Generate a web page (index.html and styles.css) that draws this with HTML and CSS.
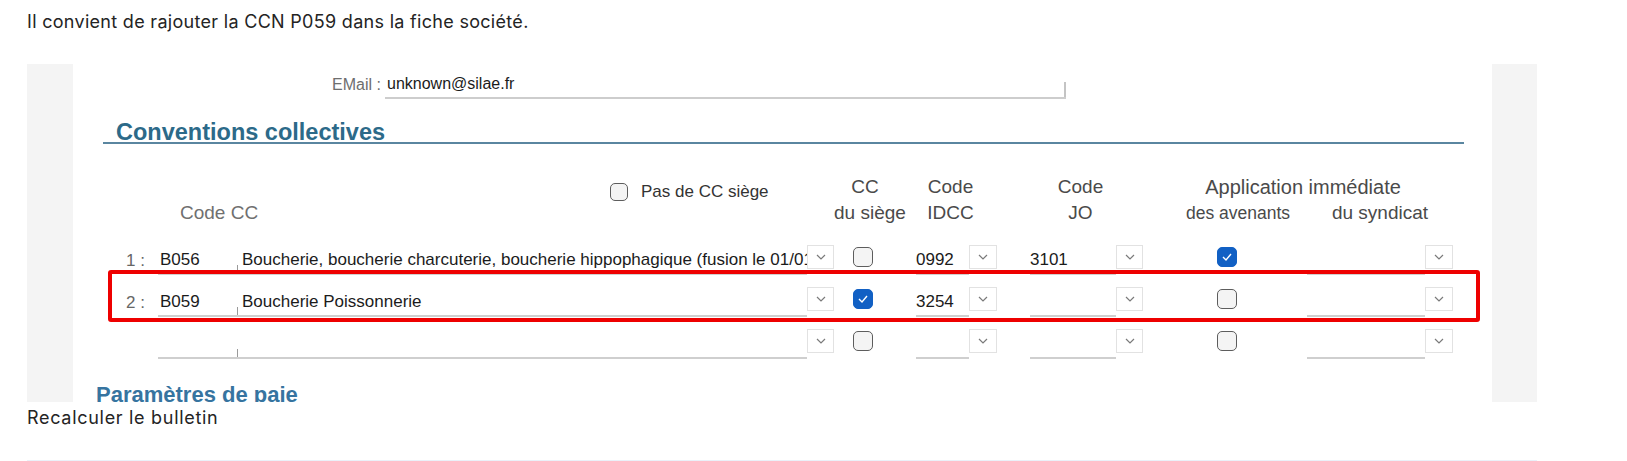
FILE: index.html
```html
<!DOCTYPE html>
<html lang="fr">
<head>
    <meta charset="UTF-8">
    <title>Fiche société - CCN</title>
    <link rel="stylesheet" href="styles.css">
</head>
<body>
    <p class="note">Il convient de rajouter la CCN P059 dans la fiche société.</p>

    <div class="shot">
        <div class="panel">
            <div class="email-row">
                <span class="email-label">EMail :</span>
                <span class="email-field">unknown@silae.fr</span>
            </div>

            <h2 class="section">Conventions collectives</h2>

            <div class="cc-head">
                <div class="h-nosiege"><span class="box small"></span><span>Pas de CC siège</span></div>
                <div class="h-siege">CC<br>du siège</div>
                <div class="h-idcc">Code<br>IDCC</div>
                <div class="h-jo">Code<br>JO</div>
                <div class="h-app">Application immédiate</div>
                <div class="h-code">Code CC</div>
                <div class="h-aven">des avenants</div>
                <div class="h-synd">du syndicat</div>
            </div>

            <div class="cc-row">
                <div class="num">1 :</div>
                <div class="fld code">B056</div>
                <div class="fld desc">Boucherie, boucherie charcuterie, boucherie hippophagique (fusion le 01/01/2019)</div>
                <div class="dd"><svg width="10" height="6" viewBox="0 0 10 6"><polyline points="1,1 5,5 9,1"/></svg></div>
                <span class="box siege"></span>
                <div class="fld idcc">0992</div>
                <div class="dd"><svg width="10" height="6" viewBox="0 0 10 6"><polyline points="1,1 5,5 9,1"/></svg></div>
                <div class="fld jo">3101</div>
                <div class="dd"><svg width="10" height="6" viewBox="0 0 10 6"><polyline points="1,1 5,5 9,1"/></svg></div>
                <span class="box aven checked"><svg width="12" height="10" viewBox="0 0 12 10"><polyline points="2,5 5,8 10,2"/></svg></span>
                <div class="fld synd"></div>
                <div class="dd"><svg width="10" height="6" viewBox="0 0 10 6"><polyline points="1,1 5,5 9,1"/></svg></div>
            </div>

            <div class="cc-row">
                <div class="num">2 :</div>
                <div class="fld code">B059</div>
                <div class="fld desc">Boucherie Poissonnerie</div>
                <div class="dd"><svg width="10" height="6" viewBox="0 0 10 6"><polyline points="1,1 5,5 9,1"/></svg></div>
                <span class="box siege checked"><svg width="12" height="10" viewBox="0 0 12 10"><polyline points="2,5 5,8 10,2"/></svg></span>
                <div class="fld idcc">3254</div>
                <div class="dd"><svg width="10" height="6" viewBox="0 0 10 6"><polyline points="1,1 5,5 9,1"/></svg></div>
                <div class="fld jo"></div>
                <div class="dd"><svg width="10" height="6" viewBox="0 0 10 6"><polyline points="1,1 5,5 9,1"/></svg></div>
                <span class="box aven"></span>
                <div class="fld synd"></div>
                <div class="dd"><svg width="10" height="6" viewBox="0 0 10 6"><polyline points="1,1 5,5 9,1"/></svg></div>
            </div>

            <div class="cc-row">
                <div class="num"></div>
                <div class="fld code"></div>
                <div class="fld desc"></div>
                <div class="dd"><svg width="10" height="6" viewBox="0 0 10 6"><polyline points="1,1 5,5 9,1"/></svg></div>
                <span class="box siege"></span>
                <div class="fld idcc"></div>
                <div class="dd"><svg width="10" height="6" viewBox="0 0 10 6"><polyline points="1,1 5,5 9,1"/></svg></div>
                <div class="fld jo"></div>
                <div class="dd"><svg width="10" height="6" viewBox="0 0 10 6"><polyline points="1,1 5,5 9,1"/></svg></div>
                <span class="box aven"></span>
                <div class="fld synd"></div>
                <div class="dd"><svg width="10" height="6" viewBox="0 0 10 6"><polyline points="1,1 5,5 9,1"/></svg></div>
            </div>

            <h2 class="section sub">Paramètres de paie</h2>

            <!-- annotation encadrée en rouge -->
            <div class="highlight"></div>
        </div>
    </div>

    <p class="note after">Recalculer le bulletin</p>
    <div class="next-shot"></div>
</body>
</html>
```

FILE: styles.css
```css
html, body {
    overflow: hidden;
}
body {
    margin: 0;
    padding: 0 0 0 27px;
    font-family: Inter, "Noto Sans", sans-serif;
    font-size: 18px;
    letter-spacing: 0.3px;
    color: #242424;
}
.note {
    margin: 10px 0 0 0;
    line-height: 24px;
}
.note.after {
    margin-top: 4px;
    letter-spacing: 0.7px;
}

/* capture d'écran */
.shot {
    margin-top: 30px;
    width: 1510px;
    height: 338px;
    padding: 0 45px 0 46px;
    box-sizing: border-box;
    background: #f4f4f4;
}
.panel {
    position: relative;
    height: 100%;
    background: #fff;
    overflow: hidden;
    font-family: "Liberation Sans", Arial, sans-serif;
    font-size: 19px;
    letter-spacing: 0;
    color: #1b1b1b;
}

.email-row {
    display: flex;
    align-items: flex-end;
    height: 30px;
    margin-top: 5px;
}
.email-label {
    width: 308px;
    text-align: right;
    font-size: 16px;
    color: #6e6e6e;
    line-height: 26px;
    padding-bottom: 1px;
}
.email-field {
    position: relative;
    width: 679px;
    height: 26px;
    margin-left: 4px;
    padding-left: 2px;
    font-size: 16px;
    line-height: 26px;
    border-bottom: 2px solid #cdcdcd;
}
.email-field::after {
    content: "";
    position: absolute;
    right: 0;
    bottom: 0;
    width: 2px;
    height: 15px;
    background: #c4c4c4;
}

.section {
    margin: 23px 0 0 30px;
    width: 1348px;
    padding-left: 13px;
    font-size: 23.5px;
    line-height: 20px;
    font-weight: bold;
    color: #2c6a89;
    border-bottom: 2px solid #5a86a0;
}
.section.sub {
    margin: 16px 0 0 23px;
    padding-left: 0;
    font-size: 22px;
    line-height: 26px;
    border: none;
    color: #3674a0;
}

/* grille commune en-tête / lignes */
.cc-head, .cc-row {
    display: grid;
    grid-template-columns: 48px 79px 570px 27px 82px 53px 28px 33px 86px 27px 164px 118px 28px;
    margin-left: 37px;
}
.cc-head {
    margin-top: 30px;
    grid-template-rows: 26px 26px;
    line-height: 26px;
    color: #4a4a4a;
    white-space: nowrap;
}
.h-nosiege {
    grid-column: 3;
    grid-row: 1;
    display: flex;
    align-items: center;
    gap: 13px;
    padding-left: 373px;
    margin-top: 9px;
    font-size: 17px;
    color: #333;
}
.h-siege {
    grid-column: 5;
    grid-row: 1 / 3;
    text-align: center;
    padding-right: 20px;
}
.h-idcc {
    grid-column: 6 / 8;
    grid-row: 1 / 3;
    text-align: center;
    padding-right: 12px;
}
.h-jo {
    grid-column: 9 / 11;
    grid-row: 1 / 3;
    text-align: center;
    padding-right: 12px;
}
.h-app {
    grid-column: 11 / 14;
    grid-row: 1;
    text-align: center;
    padding-left: 10px;
    font-size: 20px;
}
.h-code {
    grid-column: 2 / 4;
    grid-row: 2;
    padding-left: 22px;
    color: #707070;
}
.h-aven {
    grid-column: 11;
    grid-row: 2;
    text-align: center;
    padding-left: 26px;
    font-size: 17.5px;
}
.h-synd {
    grid-column: 12 / 14;
    grid-row: 2;
    text-align: center;
}

.cc-row {
    height: 42px;
    font-size: 17px;
}
.cc-head + .cc-row {
    margin-top: 14px;
}
.num {
    text-align: right;
    padding-right: 13px;
    line-height: 42px;
    color: #666;
}
.fld {
    position: relative;
    align-self: start;
    margin-top: 7px;
    height: 26px;
    line-height: 26px;
    border-bottom: 2px solid #cfcfcf;
    white-space: nowrap;
    overflow: hidden;
}
.code {
    padding-left: 2px;
}
.desc {
    padding-left: 5px;
}
.desc::before {
    content: "";
    position: absolute;
    left: 0;
    bottom: 0;
    width: 1px;
    height: 8px;
    background: #9a9a9a;
}
.idcc {
    grid-column: 6;
}
.jo {
    grid-column: 9;
}
.synd {
    grid-column: 12;
}

.dd {
    align-self: start;
    margin-top: 5px;
    height: 24px;
    border: 1px solid #e2e2e2;
    box-sizing: border-box;
    background: #fff;
    display: flex;
    align-items: center;
    justify-content: center;
}
.dd svg polyline {
    fill: none;
    stroke: #7a7a7a;
    stroke-width: 1.2;
}

.box {
    width: 20px;
    height: 20px;
    box-sizing: border-box;
    border: 1.5px solid #5d5d5d;
    border-radius: 5px;
    background: #f4f4f4;
    display: flex;
    align-items: center;
    justify-content: center;
}
.box.small {
    width: 18px;
    height: 18px;
}
.cc-row .box {
    align-self: start;
    margin-top: 7px;
}
.box.siege {
    grid-column: 5;
    margin-left: 19px;
}
.box.aven {
    grid-column: 11;
    margin-left: 74px;
}
.box.checked {
    background: #1160c4;
    border-color: #1160c4;
}
.box.checked svg polyline {
    fill: none;
    stroke: #fff;
    stroke-width: 1.4;
}

.highlight {
    position: absolute;
    left: 35px;
    top: 206px;
    width: 1372px;
    height: 52px;
    box-sizing: border-box;
    border: 4px solid #ee0000;
    border-radius: 3px;
}

.next-shot {
    margin-top: 30px;
    width: 1510px;
    height: 1px;
    background: #eaf1f9;
}
```
